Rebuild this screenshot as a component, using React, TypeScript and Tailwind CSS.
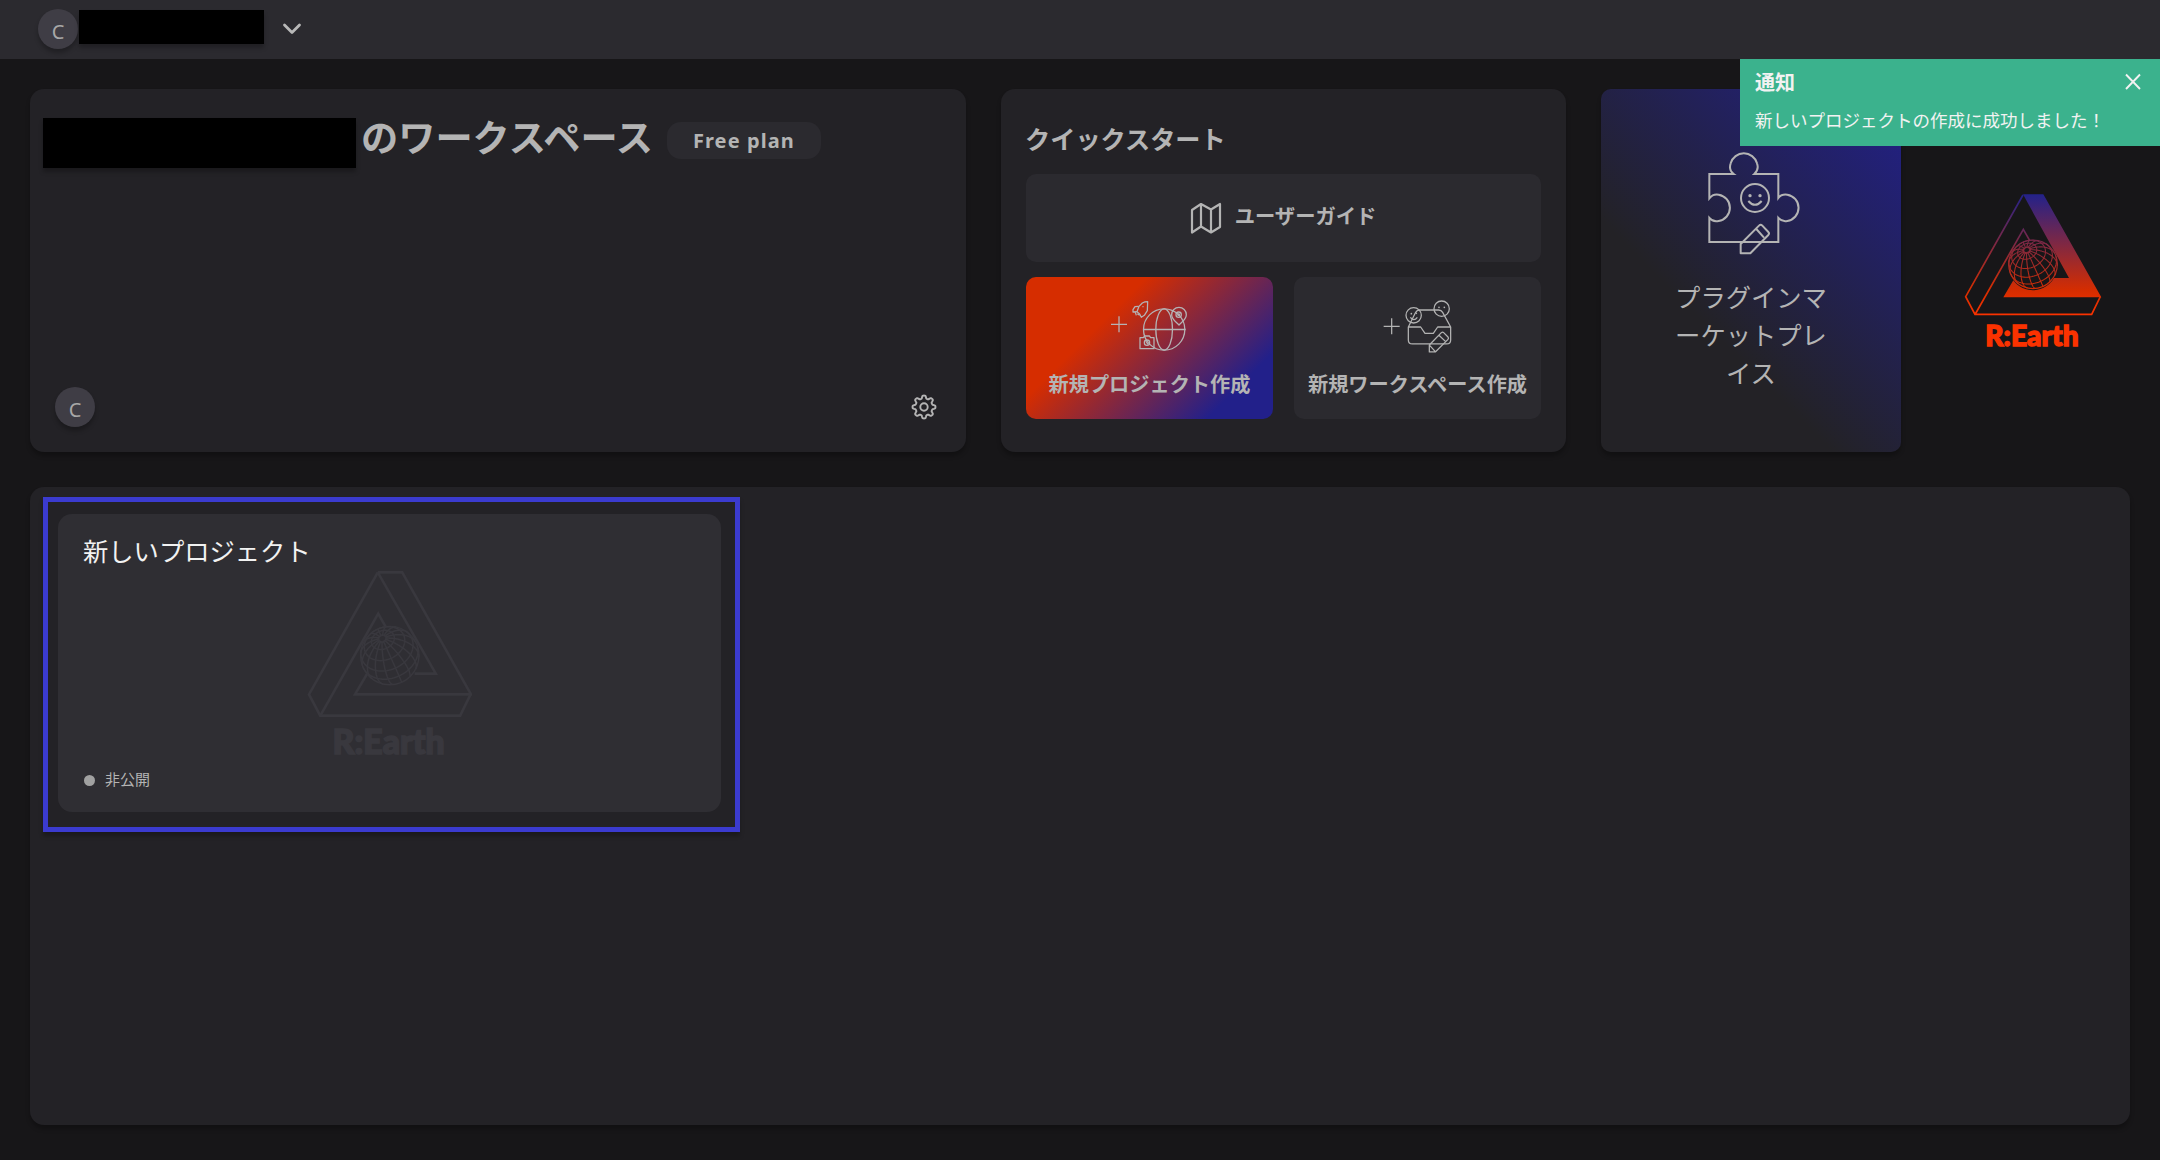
import { useId } from "react";

type Pt = [number, number];

// Orthographic wireframe globe centred on (cx,cy) with the pole tilted toward the viewer.
function globePaths(cx: number, cy: number, r: number): string[] {
  const px = -0.26;
  const py = 0.589;
  const pz = Math.sqrt(1 - px * px - py * py);
  const ul = Math.hypot(pz, px);
  const u = [pz / ul, 0, -px / ul];
  const v = [py * u[2] - pz * u[1], pz * u[0] - px * u[2], px * u[1] - py * u[0]];
  const point = (c: number, l: number) => {
    const s = Math.sin(c);
    const k = Math.cos(c);
    const a = Math.cos(l) * s;
    const b = Math.sin(l) * s;
    return [
      cx + (px * k + u[0] * a + v[0] * b) * r,
      cy - (py * k + u[1] * a + v[1] * b) * r,
      pz * k + u[2] * a + v[2] * b,
    ];
  };
  const trace = (fn: (t: number) => number[]) => {
    let d = "";
    let pen = false;
    for (let i = 0; i <= 72; i++) {
      const [x, y, z] = fn(i / 72);
      if (z < 0) {
        pen = false;
        continue;
      }
      const p: Pt = [Math.round(x * 10) / 10, Math.round(y * 10) / 10];
      d += `${pen ? "L" : "M"}${p[0]} ${p[1]}`;
      pen = true;
    }
    return d;
  };
  const rad = Math.PI / 180;
  const out: string[] = [];
  [9, 24, 46, 68, 90].forEach((c) => out.push(trace((t) => point(c * rad, t * 2 * Math.PI))));
  for (let m = 0; m < 16; m++) {
    out.push(trace((t) => point((6 + t * 118) * rad, (m * 22.5 + 8) * rad)));
  }
  return out;
}

const GLOBE = globePaths(279, 252, 73);

function Logo({ muted, className }: { muted?: boolean; className: string }) {
  const id = useId();
  const paint = muted ? "#39383e" : `url(#${id})`;
  const sw = muted ? 6.5 : 5;
  return (
    <svg viewBox="72 38 414 490" className={className} fill="none" stroke={paint} strokeWidth={sw}>
      <defs>
        <linearGradient id={id} gradientUnits="userSpaceOnUse" x1="0" y1="42" x2="0" y2="404">
          <stop offset="0" stopColor="#23228a" />
          <stop offset="0.8" stopColor="#d62d00" />
          <stop offset="1" stopColor="#fb3200" />
        </linearGradient>
      </defs>
      <path d="M249 44 77 349 105 402H455L481 349" />
      <path d="M106 401 250 147 271 184" />
      {muted ? (
        <path d="M249 44H310L482 349H192L222 298M249 44 394 297H341" />
      ) : (
        <path
          d="M249 42H310L484 351H190L220 300A73 73 0 0 0 342 293H387Z"
          fill={paint}
          stroke="none"
        />
      )}
      <circle cx="279" cy="252" r="73" fill={muted ? "#2f2e33" : "#171618"} strokeWidth="3.5" />
      <g strokeWidth={muted ? 3.8 : 3.2}>
        {GLOBE.map((d, i) => (
          <path key={i} d={d} />
        ))}
      </g>
      <text
        x="136"
        y="498"
        textLength="280"
        lengthAdjust="spacingAndGlyphs"
        className="font-['Lato','Liberation_Sans',sans-serif] text-[84px] font-black"
        fill={muted ? "#39383e" : "#fb3200"}
        stroke={muted ? "#39383e" : "#fb3200"}
        strokeWidth="4"
      >
        R:Earth
      </text>
    </svg>
  );
}

function Avatar({ className = "" }: { className?: string }) {
  return (
    <div
      className={`flex h-10 w-10 shrink-0 items-center justify-center rounded-full bg-[#3f3d45] pt-[5px] font-['Noto_Sans',sans-serif] text-[20px] leading-none text-[#a8a8a8] shadow-[0_4px_4px_rgba(0,0,0,0.25)] ${className}`}
    >
      C
    </div>
  );
}

function ProjectIcon() {
  return (
    <svg viewBox="30 54 236 164" className="h-[54.67px] w-[78.67px]" fill="none" stroke="#b5b3b5" strokeWidth="3.8" strokeLinejoin="round">
      <path d="M33 133H81M57 109V157" />
      <circle cx="192.500" cy="148.500" r="62" />
      <ellipse cx="192.500" cy="148.500" rx="25" ry="62" />
      <path d="M130 148.500H257" />
      <path d="M143 65Q134 65 127 69L117 79 111 95 119 102 124 112 133 106 142 92Z" />
      <path d="M116 79 105 80 99 89 99 96 111 95M106 97 109 106M119 106 112 101" />
      <circle cx="129" cy="80" r="2" fill="#b5b3b5" stroke="none" />
      <path d="M237 135C225 123 215 117 215 104A22 22 0 0 1 259 104C259 117 249 123 237 135Z" />
      <circle cx="236" cy="104" r="8" />
      <circle cx="236" cy="104" r="2.500" />
      <path d="M120 173H130L134 168H148L152 173H162V206H120Z" />
      <circle cx="141" cy="188" r="8" />
      <path d="M138 184 144 193" />
    </svg>
  );
}

function WorkspaceIcon() {
  return (
    <svg viewBox="40 57 208 164" className="h-[54.67px] w-[69.33px]" fill="none" stroke="#b3b3b3" strokeWidth="3.8" strokeLinejoin="round">
      <path d="M42 139H90M66 115V163" />
      <path d="M116 141 138 97Q142 90 149 90H207Q215 90 219 97L243 141V180Q243 192 231 192H128Q116 192 116 180ZM116 141H153L166 160H191L204 141H243" />
      <circle cx="132" cy="106" r="23" />
      <circle cx="216" cy="86" r="23" />
      <path d="M122 112Q133 126 143 112" />
      <g fill="#b3b3b3" stroke="none">
        <circle cx="125" cy="101" r="2.500" />
        <circle cx="140" cy="100" r="2.500" />
        <circle cx="208" cy="82" r="2.500" />
        <circle cx="224" cy="82" r="2.500" />
      </g>
      <path d="M179 195 215 158Q219 155 222 158L235 171Q238 175 235 178L197 216H179ZM208 166 228 185M180 196 197 215" />
    </svg>
  );
}

function PuzzleIcon() {
  return (
    <svg viewBox="50 34 282 314" className="h-[104.67px] w-[94px]" fill="none" stroke="#b4b4b4" strokeWidth="6" strokeLinejoin="round">
      <path
        strokeLinejoin="miter"
        d="M57 176V103H130C118 94 118 80 121 71A41 41 0 0 1 200 71C204 82 202 94 192 103H264V175C272 164 284 164 291 165A40 40 0 0 1 291 244C280 246 270 242 264 235V307H57V235C65 245 76 246 85 244A40 40 0 0 0 85 165C74 163 64 167 57 176Z"
      />
      <circle cx="194" cy="175" r="42" />
      <path d="M174 184Q194 207 214 184" />
      <circle cx="179" cy="168" r="5" fill="#b4b4b4" stroke="none" />
      <circle cx="209" cy="168" r="5" fill="#b4b4b4" stroke="none" />
      <path d="M151 313 206 258Q211 253 216 258L234 277Q238 281 234 286L180 341H151ZM198 268 221 294" />
    </svg>
  );
}

function GearIcon() {
  const d = Array.from({ length: 97 }, (_, i) => {
    const a = (i / 96) * Math.PI * 2;
    const r = 10 + 1.5 * Math.tanh(2.2 * Math.cos(8 * a));
    return `${i ? "L" : "M"}${(13 + r * Math.sin(a)).toFixed(2)} ${(13 - r * Math.cos(a)).toFixed(2)}`;
  }).join("");
  return (
    <svg viewBox="0 0 26 26" className="mb-px h-[26px] w-[26px]" fill="none" stroke="#b4b4b4" strokeWidth="1.900" strokeLinejoin="round">
      <path d={`${d}Z`} />
      <circle cx="13" cy="13" r="3.700" />
    </svg>
  );
}

export default function App() {
  return (
    <div className="relative flex h-[1160px] w-[2160px] flex-col overflow-hidden bg-[#171618] font-['Noto_Sans_CJK_JP',sans-serif] text-[#b4b4b4]">
      <header className="flex h-[59px] shrink-0 items-start bg-[#2b2a2f] pl-[38px]">
        <Avatar className="mt-[9px]" />
        <div className="mt-[10px] ml-px h-[34px] w-[185px] bg-black shadow-[0_4px_4px_rgba(0,0,0,0.25)]" />
        <svg viewBox="0 0 20 14" className="mt-[22px] ml-[18px] h-[14px] w-5" fill="none" stroke="#b8b8b8" strokeWidth="2.800" strokeLinecap="round" strokeLinejoin="round">
          <path d="M2.500 3 10 10.500 17.500 3" />
        </svg>
      </header>

      <main className="flex flex-1 flex-col gap-[35px] px-[30px] pt-[30px] pb-[35px]">
        <div className="flex h-[363px] shrink-0 gap-[35px]">
          <section className="flex w-[936px] flex-col justify-between rounded-[14px] bg-[#232226] shadow-[0_4px_4px_rgba(0,0,0,0.25)]">
            <div className="flex items-start pt-[29px] pl-[13px]">
              <div className="h-[50px] w-[313px] bg-black shadow-[0_4px_4px_rgba(0,0,0,0.25)]" />
              <h1 className="-mt-1 ml-[5px] text-[37.2px] leading-[44px] font-bold whitespace-nowrap">のワークスペース</h1>
              <div className="mt-1 ml-[14px] flex h-[37px] w-[154px] items-center justify-center rounded-[14px] bg-[#2b2a2f] pt-px font-['Noto_Sans',sans-serif] text-[20px] leading-none font-bold tracking-[1.1px]">
                Free plan
              </div>
            </div>
            <div className="flex items-center justify-between pr-[29px] pb-[25px] pl-[25px]">
              <Avatar />
              <GearIcon />
            </div>
          </section>

          <section className="flex w-[565px] flex-col rounded-[14px] bg-[#232226] px-[25px] shadow-[0_4px_4px_rgba(0,0,0,0.25)]">
            <h2 className="mt-[30px] -ml-px h-[55px] text-[25.2px] leading-[38px] font-bold">クイックスタート</h2>
            <div className="flex h-[88px] items-center justify-center rounded-[10px] bg-[#2b2a2f] pr-px">
              <svg viewBox="0 0 32 32" className="-mt-px h-8 w-8" fill="none" stroke="#b4b4b4" strokeWidth="2.200" strokeLinejoin="round">
                <path d="M2 8 11 2 21 7.500 30 2V25L21 30.500 11 24.500 2 30.500ZM11 2V24.500M21 7.500V30.500" />
              </svg>
              <span className="-mt-[6px] ml-[13px] text-[20.3px] leading-8 font-bold">ユーザーガイド</span>
            </div>
            <div className="mt-[15px] flex h-[142px] gap-[21px]">
              <div className="flex w-[247px] flex-col items-center rounded-[10px] bg-[linear-gradient(135deg,#d62d00_31%,#22208a_83%)]">
                <div className="mt-[21px] -ml-px">
                  <ProjectIcon />
                </div>
                <span className="mt-[15px] text-[20.2px] leading-8 font-bold whitespace-nowrap">新規プロジェクト作成</span>
              </div>
              <div className="flex w-[247px] flex-col items-center rounded-[10px] bg-[#2b2a2f]">
                <div className="mt-[22px] ml-[1px]">
                  <WorkspaceIcon />
                </div>
                <span className="mt-[14px] text-[20.2px] leading-8 font-bold whitespace-nowrap">新規ワークスペース作成</span>
              </div>
            </div>
          </section>

          <section className="flex w-[300px] flex-col items-center rounded-[10px] bg-[linear-gradient(45deg,#232226_35%,#22208a_100%)] shadow-[0_4px_4px_rgba(0,0,0,0.25)]">
            <div className="mt-[62px] ml-[5px]">
              <PuzzleIcon />
            </div>
            <p className="mt-[21px] w-[154px] text-center text-[25.3px] leading-[38.4px] break-all">
              プラグインマ
              <br />
              ーケットプレ
              <br />
              イス
            </p>
          </section>

          <div className="ml-[28px] flex pt-[104px]">
            <Logo className="h-[163.33px] w-[138px]" />
          </div>
        </div>

        <section className="flex flex-1 items-start rounded-[14px] bg-[#232226] pt-[10px] pl-[13px] shadow-[0_4px_4px_rgba(0,0,0,0.25)]">
          <div className="h-[335px] w-[697px] border-[5px] border-[#3b3bcf] pt-3 pl-[10px] shadow-[0_4px_4px_rgba(0,0,0,0.25)]">
            <article className="relative flex h-[298px] w-[663px] flex-col justify-between rounded-[14px] bg-[#2f2e33]">
              <h3 className="pt-[17px] pl-[25px] text-[25.3px] leading-[38px] text-[#f2f2f2]">新しいプロジェクト</h3>
              <div className="pointer-events-none absolute inset-0 flex justify-center pt-[56px]">
                <Logo muted className="h-[196px] w-[165.6px]" />
              </div>
              <div className="flex items-center pb-[21px] pl-[26px]">
                <span className="h-[11px] w-[11px] rounded-full bg-[#a1a1a1]" />
                <span className="-mt-[3px] ml-[10px] text-[15px] leading-6">非公開</span>
              </div>
            </article>
          </div>
        </section>
      </main>

      <aside className="absolute top-[59px] right-0 flex h-[87px] w-[420px] flex-col bg-[#3bb28d] pt-[8px] pl-[15px] text-[#f2f2f2]">
        <div className="flex h-[32px] items-start justify-between pr-[18px]">
          <strong className="pt-px text-[20px] leading-[28px] font-bold">通知</strong>
          <svg viewBox="0 0 18 18" className="mt-[6px] h-[18px] w-[18px]" fill="none" stroke="#f2f2f2" strokeWidth="1.900">
            <path d="M2 1.500 16 16M16 1.500 2 16" />
          </svg>
        </div>
        <p className="mt-[7px] text-[17.5px] leading-7 whitespace-nowrap">新しいプロジェクトの作成に成功しました！</p>
      </aside>
    </div>
  );
}
